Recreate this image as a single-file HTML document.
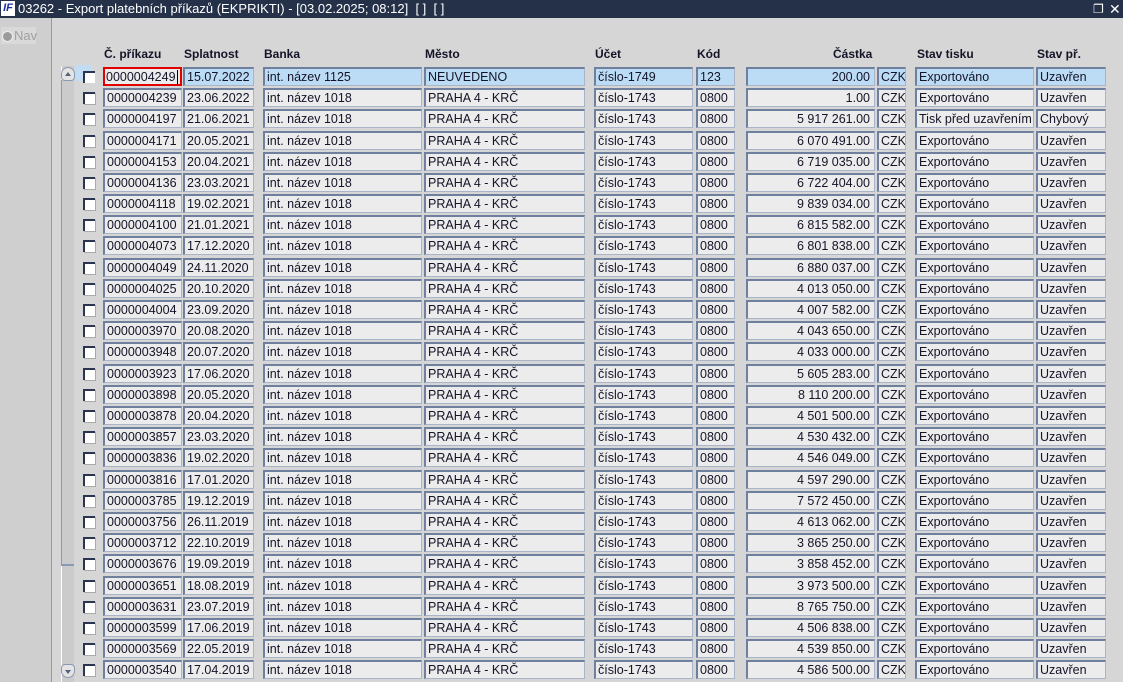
<!DOCTYPE html><html><head><meta charset="utf-8"><style>
*{margin:0;padding:0;box-sizing:border-box}
body{width:1123px;height:682px;overflow:hidden;background:#d6d6d6;font:12.5px "Liberation Sans",Arial,sans-serif;color:#141428;position:relative}
#tb{position:absolute;left:0;top:0;width:1123px;height:18px;background:#243149;color:#fff;font-size:13px;line-height:18px}
#tb .lg{position:absolute;left:1px;top:1px;width:14px;height:15px;background:#fff;color:#1a2fa0;font:bold italic 11px/15px "Liberation Sans",sans-serif;text-align:center}
#tb .t{position:absolute;left:18px;top:0}
#lp{position:absolute;left:0;top:18px;width:52px;height:664px;background:#cfcfcf;border-right:1px solid #8c9bb8}
#nav{position:absolute;left:1px;top:9px;width:35px;height:17px;background:#d9d9d9;color:#a0a0a0;font-size:13px;line-height:17px;padding-left:13px}
#nav:before{content:"";position:absolute;left:1px;top:4px;width:9px;height:9px;border-radius:50%;background:#9a9a9a;border:1px solid #eee}
#sb{position:absolute;left:61px;top:66px;width:13px;height:616px;background:#cbcbcb;border-left:1px solid #fff}
#sbl{position:absolute;left:61px;top:80px;width:13px;height:486px;border-bottom:2px solid #8a9ab5;border-left:1px solid #8a9ab5}
.ar{position:absolute;left:61px;width:14px;height:14px;border-radius:50% 50% 4px 4px;border:1px solid #8a9ab5;background:#e4e4e4}
.ar:after{content:"";position:absolute;left:3px;border-left:3px solid transparent;border-right:3px solid transparent}
.up:after{top:4px;border-bottom:4px solid #55627c}
.dn{border-radius:4px 4px 50% 50%}.dn:after{top:5px;border-top:4px solid #55627c}
.h{position:absolute;top:47px;font-weight:bold;font-size:12px}
.r{position:absolute;left:0;height:19px;width:1123px}
.r>i{position:absolute;top:4px;left:83px;width:12px;height:12px;background:#fff;border-top:2px solid #2b3550;border-left:2px solid #2b3550;box-shadow:1px 1px 0 #aaa}
.r>b{position:absolute;top:0;height:19px;font-weight:normal;background:#ececec;border:1px solid #a9b4c8;border-top:2px solid #6f7f9e;border-left:2px solid #6f7f9e;line-height:16px;padding-left:2px;white-space:nowrap;overflow:hidden}
.s>b{background:#bcdcf6}
.s>b.a{background:#ececec;border:2px solid #e00000;padding-left:1px}
.s>i{box-shadow:-5px -4px 0 2px #c2dcf4}
.cur{display:inline-block;width:1px;height:14px;background:#000;vertical-align:-3px;margin-left:1px}
.a{left:103px;width:79px}.b{left:183px;width:71px}.c{left:263px;width:159px}.d{left:424px;width:161px}
.e{left:594px;width:99px}.f{left:696px;width:39px}.g{left:746px;width:129px;text-align:right;padding-right:4px}
.k{left:877px;width:29px}.l{left:915px;width:119px}.m{left:1036px;width:70px}
</style></head><body>
<div id="tb"><div class="lg">IF</div><div class="t">03262 - Export platebních příkazů (EKPRIKTI) - [03.02.2025; 08:12]&nbsp; [ ]&nbsp; [ ]</div><div style="position:absolute;left:1093px;top:0;font-size:12px">&#x2750;</div><div style="position:absolute;left:1109px;top:0;font-size:14px">✕</div></div>
<div id="lp"><div id="nav">Nav</div></div>
<div id="sb"></div><div id="sbl"></div>
<div class="ar up" style="top:67px"></div><div class="ar dn" style="top:664px"></div>
<div class="h" style="left:104px">Č. příkazu</div><div class="h" style="left:184px">Splatnost</div><div class="h" style="left:264px">Banka</div><div class="h" style="left:425px">Město</div><div class="h" style="left:595px">Účet</div><div class="h" style="left:697px">Kód</div><div class="h" style="left:833px">Částka</div><div class="h" style="left:917px">Stav tisku</div><div class="h" style="left:1037px">Stav př.</div>
<div class="r s" style="top:67px"><i></i><b class="a">0000004249<span class="cur"></span></b><b class="b">15.07.2022</b><b class="c">int. název 1125</b><b class="d">NEUVEDENO</b><b class="e">číslo-1749</b><b class="f">123</b><b class="g">200.00</b><b class="k">CZK</b><b class="l">Exportováno</b><b class="m">Uzavřen</b></div>
<div class="r" style="top:88px"><i></i><b class="a">0000004239</b><b class="b">23.06.2022</b><b class="c">int. název 1018</b><b class="d">PRAHA 4 - KRČ</b><b class="e">číslo-1743</b><b class="f">0800</b><b class="g">1.00</b><b class="k">CZK</b><b class="l">Exportováno</b><b class="m">Uzavřen</b></div>
<div class="r" style="top:109px"><i></i><b class="a">0000004197</b><b class="b">21.06.2021</b><b class="c">int. název 1018</b><b class="d">PRAHA 4 - KRČ</b><b class="e">číslo-1743</b><b class="f">0800</b><b class="g">5 917 261.00</b><b class="k">CZK</b><b class="l">Tisk před uzavřením</b><b class="m">Chybový</b></div>
<div class="r" style="top:131px"><i></i><b class="a">0000004171</b><b class="b">20.05.2021</b><b class="c">int. název 1018</b><b class="d">PRAHA 4 - KRČ</b><b class="e">číslo-1743</b><b class="f">0800</b><b class="g">6 070 491.00</b><b class="k">CZK</b><b class="l">Exportováno</b><b class="m">Uzavřen</b></div>
<div class="r" style="top:152px"><i></i><b class="a">0000004153</b><b class="b">20.04.2021</b><b class="c">int. název 1018</b><b class="d">PRAHA 4 - KRČ</b><b class="e">číslo-1743</b><b class="f">0800</b><b class="g">6 719 035.00</b><b class="k">CZK</b><b class="l">Exportováno</b><b class="m">Uzavřen</b></div>
<div class="r" style="top:173px"><i></i><b class="a">0000004136</b><b class="b">23.03.2021</b><b class="c">int. název 1018</b><b class="d">PRAHA 4 - KRČ</b><b class="e">číslo-1743</b><b class="f">0800</b><b class="g">6 722 404.00</b><b class="k">CZK</b><b class="l">Exportováno</b><b class="m">Uzavřen</b></div>
<div class="r" style="top:194px"><i></i><b class="a">0000004118</b><b class="b">19.02.2021</b><b class="c">int. název 1018</b><b class="d">PRAHA 4 - KRČ</b><b class="e">číslo-1743</b><b class="f">0800</b><b class="g">9 839 034.00</b><b class="k">CZK</b><b class="l">Exportováno</b><b class="m">Uzavřen</b></div>
<div class="r" style="top:215px"><i></i><b class="a">0000004100</b><b class="b">21.01.2021</b><b class="c">int. název 1018</b><b class="d">PRAHA 4 - KRČ</b><b class="e">číslo-1743</b><b class="f">0800</b><b class="g">6 815 582.00</b><b class="k">CZK</b><b class="l">Exportováno</b><b class="m">Uzavřen</b></div>
<div class="r" style="top:236px"><i></i><b class="a">0000004073</b><b class="b">17.12.2020</b><b class="c">int. název 1018</b><b class="d">PRAHA 4 - KRČ</b><b class="e">číslo-1743</b><b class="f">0800</b><b class="g">6 801 838.00</b><b class="k">CZK</b><b class="l">Exportováno</b><b class="m">Uzavřen</b></div>
<div class="r" style="top:258px"><i></i><b class="a">0000004049</b><b class="b">24.11.2020</b><b class="c">int. název 1018</b><b class="d">PRAHA 4 - KRČ</b><b class="e">číslo-1743</b><b class="f">0800</b><b class="g">6 880 037.00</b><b class="k">CZK</b><b class="l">Exportováno</b><b class="m">Uzavřen</b></div>
<div class="r" style="top:279px"><i></i><b class="a">0000004025</b><b class="b">20.10.2020</b><b class="c">int. název 1018</b><b class="d">PRAHA 4 - KRČ</b><b class="e">číslo-1743</b><b class="f">0800</b><b class="g">4 013 050.00</b><b class="k">CZK</b><b class="l">Exportováno</b><b class="m">Uzavřen</b></div>
<div class="r" style="top:300px"><i></i><b class="a">0000004004</b><b class="b">23.09.2020</b><b class="c">int. název 1018</b><b class="d">PRAHA 4 - KRČ</b><b class="e">číslo-1743</b><b class="f">0800</b><b class="g">4 007 582.00</b><b class="k">CZK</b><b class="l">Exportováno</b><b class="m">Uzavřen</b></div>
<div class="r" style="top:321px"><i></i><b class="a">0000003970</b><b class="b">20.08.2020</b><b class="c">int. název 1018</b><b class="d">PRAHA 4 - KRČ</b><b class="e">číslo-1743</b><b class="f">0800</b><b class="g">4 043 650.00</b><b class="k">CZK</b><b class="l">Exportováno</b><b class="m">Uzavřen</b></div>
<div class="r" style="top:342px"><i></i><b class="a">0000003948</b><b class="b">20.07.2020</b><b class="c">int. název 1018</b><b class="d">PRAHA 4 - KRČ</b><b class="e">číslo-1743</b><b class="f">0800</b><b class="g">4 033 000.00</b><b class="k">CZK</b><b class="l">Exportováno</b><b class="m">Uzavřen</b></div>
<div class="r" style="top:364px"><i></i><b class="a">0000003923</b><b class="b">17.06.2020</b><b class="c">int. název 1018</b><b class="d">PRAHA 4 - KRČ</b><b class="e">číslo-1743</b><b class="f">0800</b><b class="g">5 605 283.00</b><b class="k">CZK</b><b class="l">Exportováno</b><b class="m">Uzavřen</b></div>
<div class="r" style="top:385px"><i></i><b class="a">0000003898</b><b class="b">20.05.2020</b><b class="c">int. název 1018</b><b class="d">PRAHA 4 - KRČ</b><b class="e">číslo-1743</b><b class="f">0800</b><b class="g">8 110 200.00</b><b class="k">CZK</b><b class="l">Exportováno</b><b class="m">Uzavřen</b></div>
<div class="r" style="top:406px"><i></i><b class="a">0000003878</b><b class="b">20.04.2020</b><b class="c">int. název 1018</b><b class="d">PRAHA 4 - KRČ</b><b class="e">číslo-1743</b><b class="f">0800</b><b class="g">4 501 500.00</b><b class="k">CZK</b><b class="l">Exportováno</b><b class="m">Uzavřen</b></div>
<div class="r" style="top:427px"><i></i><b class="a">0000003857</b><b class="b">23.03.2020</b><b class="c">int. název 1018</b><b class="d">PRAHA 4 - KRČ</b><b class="e">číslo-1743</b><b class="f">0800</b><b class="g">4 530 432.00</b><b class="k">CZK</b><b class="l">Exportováno</b><b class="m">Uzavřen</b></div>
<div class="r" style="top:448px"><i></i><b class="a">0000003836</b><b class="b">19.02.2020</b><b class="c">int. název 1018</b><b class="d">PRAHA 4 - KRČ</b><b class="e">číslo-1743</b><b class="f">0800</b><b class="g">4 546 049.00</b><b class="k">CZK</b><b class="l">Exportováno</b><b class="m">Uzavřen</b></div>
<div class="r" style="top:470px"><i></i><b class="a">0000003816</b><b class="b">17.01.2020</b><b class="c">int. název 1018</b><b class="d">PRAHA 4 - KRČ</b><b class="e">číslo-1743</b><b class="f">0800</b><b class="g">4 597 290.00</b><b class="k">CZK</b><b class="l">Exportováno</b><b class="m">Uzavřen</b></div>
<div class="r" style="top:491px"><i></i><b class="a">0000003785</b><b class="b">19.12.2019</b><b class="c">int. název 1018</b><b class="d">PRAHA 4 - KRČ</b><b class="e">číslo-1743</b><b class="f">0800</b><b class="g">7 572 450.00</b><b class="k">CZK</b><b class="l">Exportováno</b><b class="m">Uzavřen</b></div>
<div class="r" style="top:512px"><i></i><b class="a">0000003756</b><b class="b">26.11.2019</b><b class="c">int. název 1018</b><b class="d">PRAHA 4 - KRČ</b><b class="e">číslo-1743</b><b class="f">0800</b><b class="g">4 613 062.00</b><b class="k">CZK</b><b class="l">Exportováno</b><b class="m">Uzavřen</b></div>
<div class="r" style="top:533px"><i></i><b class="a">0000003712</b><b class="b">22.10.2019</b><b class="c">int. název 1018</b><b class="d">PRAHA 4 - KRČ</b><b class="e">číslo-1743</b><b class="f">0800</b><b class="g">3 865 250.00</b><b class="k">CZK</b><b class="l">Exportováno</b><b class="m">Uzavřen</b></div>
<div class="r" style="top:554px"><i></i><b class="a">0000003676</b><b class="b">19.09.2019</b><b class="c">int. název 1018</b><b class="d">PRAHA 4 - KRČ</b><b class="e">číslo-1743</b><b class="f">0800</b><b class="g">3 858 452.00</b><b class="k">CZK</b><b class="l">Exportováno</b><b class="m">Uzavřen</b></div>
<div class="r" style="top:576px"><i></i><b class="a">0000003651</b><b class="b">18.08.2019</b><b class="c">int. název 1018</b><b class="d">PRAHA 4 - KRČ</b><b class="e">číslo-1743</b><b class="f">0800</b><b class="g">3 973 500.00</b><b class="k">CZK</b><b class="l">Exportováno</b><b class="m">Uzavřen</b></div>
<div class="r" style="top:597px"><i></i><b class="a">0000003631</b><b class="b">23.07.2019</b><b class="c">int. název 1018</b><b class="d">PRAHA 4 - KRČ</b><b class="e">číslo-1743</b><b class="f">0800</b><b class="g">8 765 750.00</b><b class="k">CZK</b><b class="l">Exportováno</b><b class="m">Uzavřen</b></div>
<div class="r" style="top:618px"><i></i><b class="a">0000003599</b><b class="b">17.06.2019</b><b class="c">int. název 1018</b><b class="d">PRAHA 4 - KRČ</b><b class="e">číslo-1743</b><b class="f">0800</b><b class="g">4 506 838.00</b><b class="k">CZK</b><b class="l">Exportováno</b><b class="m">Uzavřen</b></div>
<div class="r" style="top:639px"><i></i><b class="a">0000003569</b><b class="b">22.05.2019</b><b class="c">int. název 1018</b><b class="d">PRAHA 4 - KRČ</b><b class="e">číslo-1743</b><b class="f">0800</b><b class="g">4 539 850.00</b><b class="k">CZK</b><b class="l">Exportováno</b><b class="m">Uzavřen</b></div>
<div class="r" style="top:660px"><i></i><b class="a">0000003540</b><b class="b">17.04.2019</b><b class="c">int. název 1018</b><b class="d">PRAHA 4 - KRČ</b><b class="e">číslo-1743</b><b class="f">0800</b><b class="g">4 586 500.00</b><b class="k">CZK</b><b class="l">Exportováno</b><b class="m">Uzavřen</b></div>
</body></html>
